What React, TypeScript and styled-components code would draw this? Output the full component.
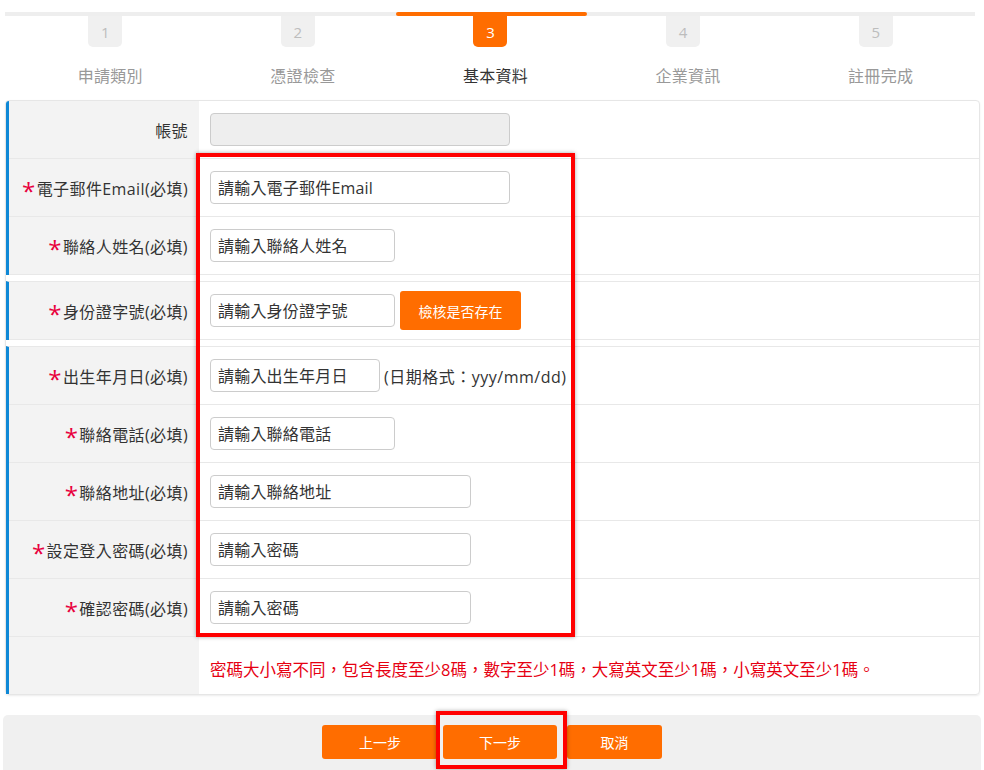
import React from 'react'
import styled, { createGlobalStyle } from 'styled-components'

const GlobalStyle = createGlobalStyle`
  html, body {
    margin: 0;
    padding: 0;
    background: #fff;
  }
  body {
    font-family: "Open Sans", "Noto Sans CJK TC", sans-serif;
    color: #333;
  }
`

const ORANGE = '#ff6d00'

const Page = styled.div`
  width: 984px;
  height: 770px;
  overflow: hidden;
  padding: 12px 0 0;
  box-sizing: border-box;
`

const Stepper = styled.div`
  display: flex;
  margin: 0 9px 0 5px;
  padding: 0 3px 0 4px;
  border-top: 4px solid #eeeeee;
`

const Step = styled.div<{ $active?: boolean }>`
  flex: 1;
  display: flex;
  flex-direction: column;
  align-items: center;
  position: relative;

  &::before {
    content: '';
    position: absolute;
    top: -4px;
    left: 2px;
    right: 0;
    height: 4px;
    border-radius: 2px;
    background: ${({ $active }) => ($active ? ORANGE : 'transparent')};
  }
`

const StepNum = styled.div<{ $active?: boolean }>`
  width: 34px;
  height: 31px;
  border-radius: 0 0 5px 5px;
  background: ${({ $active }) => ($active ? ORANGE : '#f0f0f0')};
  color: ${({ $active }) => ($active ? '#fff' : '#bdbdbd')};
  font-size: 15px;
  display: flex;
  align-items: center;
  justify-content: center;
`

const StepLabel = styled.div<{ $active?: boolean }>`
  margin-top: 18px;
  padding-left: 10px;
  font-size: 16px;
  line-height: 22px;
  letter-spacing: 0.3px;
  color: ${({ $active }) => ($active ? '#333' : '#999')};
`

const Form = styled.div`
  position: relative;
  margin: 13px 4px 0 5px;
  border: 1px solid #e6e6e6;
  border-radius: 4px;
  box-shadow: 0 1px 2px rgba(0, 0, 0, 0.08);
`

const Group = styled.div`
  border-left: 3px solid #0e88d6;
  & + & {
    margin-top: 6px;
    border-top: 1px solid #e8e8e8;
  }
  &:first-child {
    border-top-left-radius: 3px;
  }
  &:last-child {
    border-bottom-left-radius: 3px;
  }
`

const Row = styled.div<{ $last?: boolean }>`
  display: grid;
  grid-template-columns: 190px 1fr;
  height: 57px;
  border-bottom: ${({ $last }) => ($last ? 'none' : '1px solid #e8e8e8')};
`

const Label = styled.div`
  background: #f3f3f3;
  display: flex;
  align-items: center;
  justify-content: flex-end;
  padding-right: 11px;
  font-size: 16px;
  letter-spacing: 0.4px;
`

const Star = styled.span`
  color: #e8003d;
  font-size: 24px;
  line-height: 16px;
  margin-top: 7px;
  margin-right: 1px;
`

const Field = styled.div`
  display: flex;
  align-items: center;
  padding-left: 11px;
  gap: 5px;
`

const Input = styled.input<{ $w: number }>`
  width: ${({ $w }) => $w}px;
  height: 33px;
  box-sizing: border-box;
  border: 1px solid #cccccc;
  border-radius: 4px;
  padding: 0 7px;
  font-family: inherit;
  font-size: 16px;
  letter-spacing: 0.2px;
  color: #333;
  background: #fff;
  outline: none;

  &::placeholder {
    color: #333;
  }
  &:disabled {
    background: #eeeeee;
  }
`

const CheckButton = styled.button`
  height: 39px;
  width: 121px;
  border: none;
  border-radius: 3px;
  background: ${ORANGE};
  color: #fff;
  font-family: inherit;
  font-size: 14px;
`

const Hint = styled.span`
  font-size: 16px;
  letter-spacing: 0.5px;
  margin-left: -1px;
`

const Note = styled.div`
  color: #e60012;
  font-size: 16.5px;
  padding-top: 6px;
`

const Highlight = styled.div`
  position: absolute;
  border: 4px solid #ff0000;
  box-shadow: 0 0 4px rgba(0, 0, 0, 0.35);
  pointer-events: none;
`

const FormHighlight = styled(Highlight)`
  left: 190px;
  top: 52px;
  width: 371px;
  height: 476px;
`

const Actions = styled.div`
  margin: 20px 3px 0 3px;
  height: 70px;
  background: #f0f0f0;
  border-radius: 5px;
  display: flex;
  justify-content: center;
  gap: 5px;
  padding-top: 10px;
  box-sizing: border-box;
`

const ActionButton = styled.button<{ $w: number }>`
  width: ${({ $w }) => $w}px;
  height: 34px;
  border: none;
  border-radius: 3px;
  background: ${ORANGE};
  color: #fff;
  font-family: inherit;
  font-size: 14px;
`

const Marked = styled.div`
  position: relative;
  display: flex;
  margin-right: 5px;
`

const ButtonHighlight = styled(Highlight)`
  left: -7px;
  top: -14px;
  width: 123px;
  height: 50px;
`

const steps = ['申請類別', '憑證檢查', '基本資料', '企業資訊', '註冊完成']

type FieldDef = {
  label: string
  required?: boolean
  placeholder?: string
  width?: number
  disabled?: boolean
  extra?: React.ReactNode
}

const groups: FieldDef[][] = [
  [
    { label: '帳號', disabled: true, width: 300 },
    { label: '電子郵件Email(必填)', required: true, placeholder: '請輸入電子郵件Email', width: 300 },
    { label: '聯絡人姓名(必填)', required: true, placeholder: '請輸入聯絡人姓名', width: 185 },
  ],
  [
    {
      label: '身份證字號(必填)',
      required: true,
      placeholder: '請輸入身份證字號',
      width: 185,
      extra: <CheckButton>檢核是否存在</CheckButton>,
    },
  ],
  [
    {
      label: '出生年月日(必填)',
      required: true,
      placeholder: '請輸入出生年月日',
      width: 170,
      extra: <Hint>(日期格式：yyy/mm/dd)</Hint>,
    },
    { label: '聯絡電話(必填)', required: true, placeholder: '請輸入聯絡電話', width: 185 },
    { label: '聯絡地址(必填)', required: true, placeholder: '請輸入聯絡地址', width: 261 },
    { label: '設定登入密碼(必填)', required: true, placeholder: '請輸入密碼', width: 261 },
    { label: '確認密碼(必填)', required: true, placeholder: '請輸入密碼', width: 261 },
  ],
]

export default function App() {
  return (
    <Page>
      <GlobalStyle />
      <Stepper>
        {steps.map((s, i) => (
          <Step key={s} $active={i === 2}>
            <StepNum $active={i === 2}>{i + 1}</StepNum>
            <StepLabel $active={i === 2}>{s}</StepLabel>
          </Step>
        ))}
      </Stepper>

      <Form>
        {groups.map((rows, gi) => (
          <Group key={gi}>
            {rows.map((f) => (
              <Row key={f.label}>
                <Label>
                  {f.required && <Star>*</Star>}
                  {f.label}
                </Label>
                <Field>
                  <Input $w={f.width ?? 185} placeholder={f.placeholder} disabled={f.disabled} />
                  {f.extra}
                </Field>
              </Row>
            ))}
            {gi === groups.length - 1 && (
              <Row $last>
                <Label />
                <Field>
                  <Note>密碼大小寫不同，包含長度至少8碼，數字至少1碼，大寫英文至少1碼，小寫英文至少1碼。</Note>
                </Field>
              </Row>
            )}
          </Group>
        ))}
        <FormHighlight />
      </Form>

      <Actions>
        <ActionButton $w={116}>上一步</ActionButton>
        <Marked>
          <ActionButton $w={114}>下一步</ActionButton>
          <ButtonHighlight />
        </Marked>
        <ActionButton $w={95}>取消</ActionButton>
      </Actions>
    </Page>
  )
}
